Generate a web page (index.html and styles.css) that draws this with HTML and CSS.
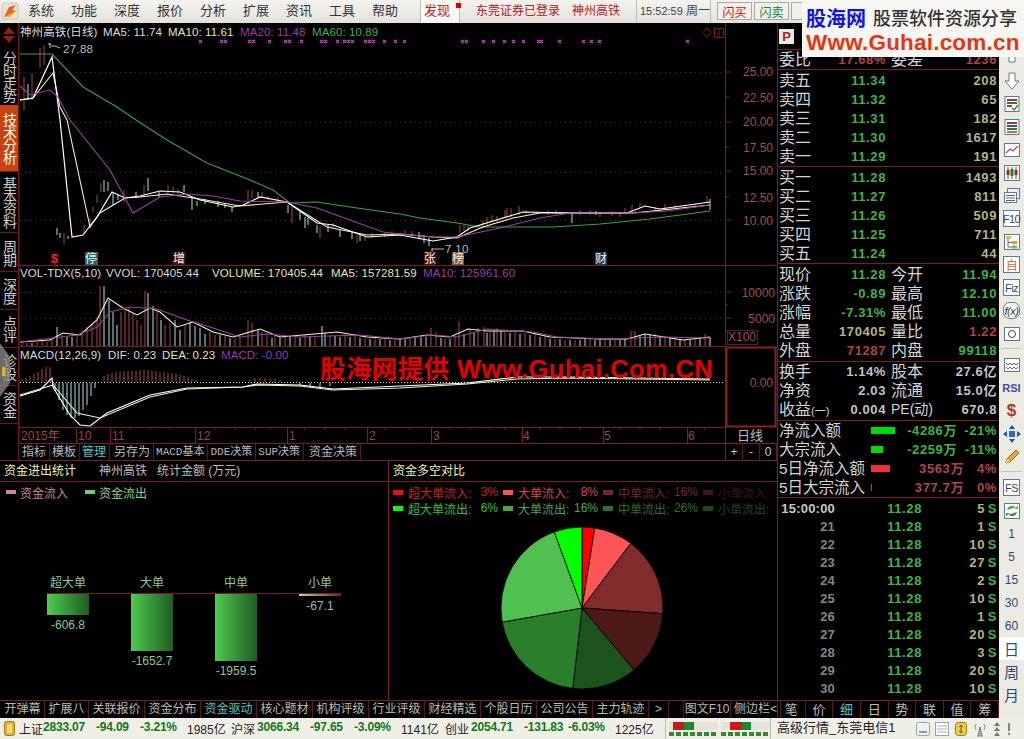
FILE: index.html
```html
<!DOCTYPE html>
<html lang="zh-CN">
<head>
  <meta charset="UTF-8" />
  <title>神州高铁 日线</title>
  <link rel="stylesheet" href="styles.css">
</head>
<body>

  <div class="menubar">
    <svg class="app-logo" width="18" height="18" viewBox="0 0 18 18"><rect x="1" y="1" width="16" height="16" rx="2" fill="#e8e4d8" stroke="#c9c4b4"/><path d="M3 15 L8 5 L15 3 L11 8 L15 9 L6 15 Z" fill="#e8641c"/><path d="M3 15 L15 9 L10 15 Z" fill="#f5b13c"/></svg>
    <nav class="menu">
      <span>系统</span><span>功能</span><span>深度</span><span>报价</span><span>分析</span><span>扩展</span><span>资讯</span><span>工具</span><span>帮助</span>
    </nav>
    <div class="menu-cell found">发现<i></i></div>
    <div class="menu-cell login"><span>东莞证券已登录</span><span>神州高铁</span></div>
    <div class="menu-cell clock">15:52:59 <span>周一</span></div>
    <div class="flash">
      <button class="buy">闪买</button>
      <button class="sell">闪卖</button>
      <button class="cut"></button>
    </div>
  </div>

  <div class="main">
    <div class="work">
      <div class="upper">
        <div class="left">
          <div class="top-row">
            <div class="vtabs">
              <div class="vtab arrows"><i class="up"></i><i class="down"></i></div>
              <div class="vtab t1"><span>分时走势</span></div>
              <div class="vtab t2 active"><span>技术分析</span></div>
              <div class="vtab t3"><span>基本资料</span></div>
              <div class="vtab t4"><span>周期</span></div>
              <div class="vtab t5"><span>深度</span></div>
              <div class="vtab t5"><span>点评</span></div>
              <div class="vtab t5"><span>诊股</span></div>
              <div class="vtab t5"><span>资金</span></div>
              <svg class="handle" width="11" height="54" viewBox="0 0 11 54"><path d="M0 0 L10 14 V40 L0 54 Z" fill="#8d8d8d" opacity=".75"/><rect x="2" y="24" width="3" height="9" fill="#e0b030"/></svg>
            </div>
            <div class="charts">
              <svg class="chart" viewBox="19 23 758 421" width="758" height="421">
                <!-- frame -->
                <path class="frame" d="M19 23V444M725.5 23V444M19 265.5H777M19 346.5H726M19 427.5H726M19 443.5H777"/>
                <path class="frame" d="M725 72h6M725 97h4M725 122h6M725 147h4M725 171h6M725 197h4M725 220h6M725 292h6M725 305h3M725 318h6M725 331h3"/>
                <path class="frame" d="M76.5 427V443M110.5 427V443M195.5 427V443M287.5 427V443M367.5 427V443M431.5 427V443M522.5 427V443M603.5 427V443M687.5 427V443"/>
                <path class="frame" d="M94 427v3M130 427v3M150 427v3M170 427v3M215 427v3M235 427v3M255 427v3M270 427v3M305 427v3M325 427v3M345 427v3M385 427v3M410 427v3M450 427v3M470 427v3M490 427v3M505 427v3M540 427v3M560 427v3M580 427v3M620 427v3M640 427v3M660 427v3M705 427v3"/>
                <rect class="axis-box" x="726.5" y="347.5" width="49" height="79"/>
                <rect class="x100" x="727.5" y="330.5" width="30" height="14"/>

                <!-- grid -->
                <path class="dots" d="M20 72.5H725M20 122.5H725M20 172.5H725M20 220.5H725M20 292.5H725M20 318.5H725"/>
                <path class="zero" d="M20 382.5H725"/>

                <!-- texts -->
                <text class="lg" y="36"><tspan x="20" class="c-w">神州高铁(日线)</tspan><tspan x="103" class="c-w">MA5: 11.74</tspan><tspan x="168" class="c-y">MA10: 11.61</tspan><tspan x="240" class="c-p">MA20: 11.48</tspan><tspan x="312" class="c-g">MA60: 10.89</tspan></text>
                <text class="lg" y="277"><tspan x="20" class="c-w">VOL-TDX(5,10)</tspan><tspan x="106" class="c-w">VVOL: 170405.44</tspan><tspan x="212" class="c-y">VOLUME: 170405.44</tspan><tspan x="331" class="c-y">MA5: 157281.59</tspan><tspan x="423" class="c-p">MA10: 125961.60</tspan></text>
                <text class="lg" y="359"><tspan x="20" class="c-w">MACD(12,26,9)</tspan><tspan x="108" class="c-w">DIF: 0.23</tspan><tspan x="162" class="c-y">DEA: 0.23</tspan><tspan x="221" class="c-p">MACD: -0.00</tspan></text>
                <text class="peak" x="63" y="53">27.88</text>
                <path class="peak-line" d="M48 44h3M50 43V48M51 46h4l5 2"/>
                <text class="peak" x="445" y="253">7.10</text>
                <path class="peak-line" d="M432 248V253M432 249h12"/>

                <text class="ax" x="773" y="76">25.00</text>
                <text class="ax" x="773" y="102">22.50</text>
                <text class="ax" x="773" y="126">20.00</text>
                <text class="ax" x="773" y="152">17.50</text>
                <text class="ax" x="773" y="175">15.00</text>
                <text class="ax" x="773" y="202">12.50</text>
                <text class="ax" x="773" y="225">10.00</text>
                <text class="ax" x="775" y="297">10000</text>
                <text class="ax" x="775" y="323">5000</text>
                <text class="ax" x="756" y="341">X100</text>
                <text class="ax" x="773" y="387">0.00</text>
                <text class="tm" x="21" y="440">2015年</text>
                <text class="tm" x="78" y="440">10</text>
                <text class="tm" x="112" y="440">11</text>
                <text class="tm" x="197" y="440">12</text>
                <text class="tm" x="289" y="440">1</text>
                <text class="tm" x="369" y="440">2</text>
                <text class="tm" x="433" y="440">3</text>
                <text class="tm" x="523" y="440">4</text>
                <text class="tm" x="604" y="440">5</text>
                <text class="tm" x="688" y="440">6</text>
                <text class="day" x="750" y="440">日线</text>

                <!-- top marks -->
                <path class="marks" d="M199 40l3 3m0-3l-3 3M220 40l3 3m0-3l-3 3M224 40l3 3m0-3l-3 3M248 40l3 3m0-3l-3 3M252 40l3 3m0-3l-3 3M268 40l3 3m0-3l-3 3M284 40l3 3m0-3l-3 3M288 40l3 3m0-3l-3 3M300 40l3 3m0-3l-3 3M320 40l3 3m0-3l-3 3M324 40l3 3m0-3l-3 3M336 40l3 3m0-3l-3 3M343 40l3 3m0-3l-3 3M347 40l3 3m0-3l-3 3M351 40l3 3m0-3l-3 3M364 40l3 3m0-3l-3 3M368 40l3 3m0-3l-3 3M372 40l3 3m0-3l-3 3M383 40l3 3m0-3l-3 3M394 40l3 3m0-3l-3 3M403 40l3 3m0-3l-3 3M461 40l3 3m0-3l-3 3M465 40l3 3m0-3l-3 3M482 40l3 3m0-3l-3 3M492 40l3 3m0-3l-3 3M503 40l3 3m0-3l-3 3M512 40l3 3m0-3l-3 3M522 40l3 3m0-3l-3 3M537 40l3 3m0-3l-3 3M540 40l3 3m0-3l-3 3M558 40l3 3m0-3l-3 3M582 40l3 3m0-3l-3 3M590 40l3 3m0-3l-3 3M598 40l3 3m0-3l-3 3M686 40l3 3m0-3l-3 3"/>
                <path class="frame" d="M703 32.5l4-4.500 4 4.500-4 4.500ZM714.500 28.500h9v9h-9ZM719 28.500v9"/>

                <!-- event tags -->
                <rect class="tag tag-red" x="50" y="252" width="9" height="13"/>
                <text class="tag-t tag-s" x="54.500" y="263">$</text>
                <rect class="tag tag-teal" x="85" y="252" width="13" height="13"/>
                <text class="tag-t" x="91" y="263">停</text>
                <rect class="tag tag-dark" x="173" y="252" width="12" height="13"/>
                <text class="tag-t" x="179" y="263">增</text>
                <rect class="tag tag-dark" x="424" y="252" width="12" height="13"/>
                <text class="tag-t" x="430" y="263">张</text>
                <rect class="tag tag-tan" x="452" y="252" width="12" height="13"/>
                <text class="tag-t" x="458" y="263">榜</text>
                <rect class="tag tag-blue" x="595" y="252" width="12" height="13"/>
                <text class="tag-t" x="601" y="263">财</text>

                <!-- candles -->
                <path class="stick-r" d="M24 77V110M32 73V100M40 48V68M44 45V65M64 233V244M84 225V233M90 218V228M93 207V212M97 195V203M101 183V192M124 190V202M144 185V195M168 185V193M173 187V193M178 189V194M248 190V200M252 190V198M262 192V197M268 196V200M278 197V202M292 207V223M320 227V238M333 223V228M357 235V243M365 236V241M372 233V238M385 232V237M392 231V236M405 230V235M412 231V236M420 236V240M460 225V233M464 225V231M468 225V231M483 220V228M487 217V225M492 215V222M497 216V222M505 210V218M507 208V217M511 208V217M519 206V215M526 210V214M534 211V214M548 210V215M556 210V214M580 210V215M590 210V215M600 212V217M612 211V216M620 212V217M625 208V214M632 205V212M640 203V208M655 207V212M665 204V210M675 205V209M685 205V209M695 204V208M707 196V203"/>
                <path class="stick-c" d="M28 84V100M57 228V235M60 233V238M68 236V239M104 180V192M108 182V191M113 193V205M118 195V200M136 192V198M148 178V191M159 192V197M184 185V192M192 197V210M197 201V206M205 199V204M218 201V207M225 204V208M232 207V212M258 192V198M288 205V213M300 212V220M305 217V228M308 218V225M317 225V233M328 225V232M340 230V237M352 232V239M360 235V241M419 232V238M424 236V243M429 238V246M572 213V223M596 211V215M710 199V210"/>

                <!-- moving averages -->
                <polyline class="ma60" points="20,54 52,54 83,87 117,107 133,118 167,140 207,163 250,180 273,190 290,203 317,202 350,207 400,214 420,218 457,223 480,227 553,227 600,224 650,219 710,211"/>
                <polyline class="ma10" points="20,100 33,98 53,73 60,107 67,120 90,227 100,213 125,198 140,197 167,194 200,199 240,206 287,202 327,227 367,235 400,234 433,237 457,238 483,227 513,218 540,213 633,213 710,205"/>
                <polyline class="ma5" points="20,100 33,98 52,57 60,120 72,237 83,235 97,217 112,192 125,198 140,196 160,191 180,192 200,200 233,207 243,205 260,197 287,202 317,223 333,225 367,237 400,235 433,241 457,237 470,228 513,215 523,212 570,213 627,213 645,206 660,209 710,202"/>
                <polyline class="ma20" points="20,86 30,95 50,90 58,97 70,120 110,170 133,213 160,197 187,194 213,196 240,201 287,202 317,208 350,220 383,232 400,234 433,237 457,237 500,228 540,218 570,213 633,213 667,211 710,205"/>

                <!-- volume -->
                <path class="bar-r" d="M22 346V343M27 346V343M37 346V342M42 346V341M47 346V342M52 346V340M62 346V335M77 346V335M82 346V331M87 346V327M92 346V324M97 346V317M100 346V286M121 346V312M125 346V310M129 346V308M133 346V313M137 346V320M141 346V325M145 346V291M157 346V312M165 346V325M170 346V323M185 346V325M210 346V332M215 346V335M225 346V336M235 346V338M240 346V337M248 346V320M252 346V323M262 346V332M267 346V335M275 346V336M285 346V337M295 346V336M305 346V335M315 346V337M330 346V335M345 346V334M355 346V336M365 346V338M375 346V338M385 346V339M395 346V339M410 346V337M431 346V328M436 346V332M445 346V338M455 346V336M459 346V321M470 346V330M478 346V328M484 346V327M490 346V332M497 346V328M505 346V332M515 346V331M525 346V333M535 346V334M545 346V336M555 346V339M565 346V340M575 346V340M590 346V339M605 346V339M615 346V340M631 346V331M635 346V331M655 346V334M665 346V336M675 346V338M685 346V340M695 346V339M705 346V334"/>
                <path class="bar-c" d="M32 346V343M57 346V327M67 346V337M72 346V337M104 346V286M109 346V300M113 346V312M117 346V325M148 346V293M153 346V306M161 346V320M175 346V320M180 346V330M190 346V322M195 346V326M200 346V328M205 346V334M220 346V335M230 346V338M258 346V330M272 346V338M280 346V338M290 346V336M300 346V338M310 346V337M322 346V326M325 346V333M335 346V336M340 346V337M350 346V337M360 346V338M370 346V339M380 346V339M390 346V340M400 346V339M405 346V338M415 346V338M421 346V337M426 346V337M441 346V338M450 346V339M464 346V334M474 346V333M487 346V333M494 346V331M501 346V331M510 346V333M520 346V334M530 346V335M540 346V337M550 346V339M560 346V339M570 346V340M580 346V340M585 346V339M595 346V340M600 346V339M610 346V340M620 346V340M625 346V339M640 346V336M645 346V335M650 346V335M660 346V337M670 346V338M680 346V339M690 346V340M700 346V338M710 346V337"/>
                <polyline class="ma10" points="20,342 50,340 63,333 80,335 97,320 108,298 123,308 137,315 150,308 160,312 177,327 193,322 213,332 233,337 260,329 280,337 337,332 367,337 400,339 427,335 450,337 468,329 487,331 523,331 550,337 600,339 627,339 645,334 683,340 710,337"/>
                <polyline class="ma20" points="20,342 77,335 97,327 110,312 130,307 157,309 187,320 213,328 240,337 267,334 300,337 360,335 400,339 433,335 457,337 487,329 533,332 557,337 607,339 667,337 710,338"/>

                <!-- macd -->
                <path class="bar-r" d="M22 382V379M26 382V378M30 382V376M34 382V374M38 382V372M42 382V369M46 382V367M50 382V367M104 382V376M108 382V374M112 382V373M116 382V372M120 382V372M124 382V371M128 382V371M132 382V371M136 382V371M140 382V370M144 382V370M148 382V370M152 382V371M156 382V371M160 382V372M164 382V372M168 382V373M172 382V373M176 382V374M180 382V375M184 382V376M188 382V377M192 382V379M196 382V380M250 382V380M255 382V378M260 382V378M265 382V378M270 382V379M275 382V379M280 382V380"/>
                <path class="bar-c" d="M55 383V391M59 383V400M63 383V410M67 383V415M71 383V418M75 383V418M79 383V416M83 383V410M87 383V405M91 383V396M95 383V388M300 383V386M310 383V386M320 383V388M330 383V386"/>
                <polyline class="ma5" points="20,396 40,390 52,378 53,387 70,415 80,425 90,426 107,413 150,395 187,388 243,387 257,384 300,385 333,389 400,386 467,383 517,377 567,377 710,379"/>
                <polyline class="ma10" points="20,395 40,389 53,385 77,413 100,418 150,397 187,389 243,387 257,385 300,386 333,390 400,388 467,384 517,379 567,378 710,380"/>
              </svg>
              <div class="chart-tabs">
                <span>指标</span><span>模板</span><span class="on">管理</span><span class="save">另存为</span><span class="mono">MACD基本</span><span class="mono">DDE决策</span><span class="mono">SUP决策</span><span class="mono-end">资金决策</span>
                <div class="zoom-btns"><b>+</b><b>-</b><b>0</b></div>
              </div>
            </div>
          </div>

          <div class="lower">
            <section class="flow-panel">
              <header class="panel-head"><strong>资金进出统计</strong><span class="stock">神州高铁</span><span>统计金额 (万元)</span></header>
              <div class="legend-simple">
                <i class="sw-in"></i><span class="txt-in">资金流入</span>
                <i class="sw-out"></i><span class="txt-out">资金流出</span>
              </div>
              <div class="bar-labels"><span>超大单</span><span>大单</span><span>中单</span><span>小单</span></div>
              <div class="baseline"></div>
              <div class="bar-cols">
                <div class="bar-col"><div class="money-bar h-xl"></div><span>-606.8</span></div>
                <div class="bar-col"><div class="money-bar h-l"></div><span>-1652.7</span></div>
                <div class="bar-col"><div class="money-bar h-m"></div><span>-1959.5</span></div>
                <div class="bar-col"><div class="money-bar h-s"></div><span>-67.1</span></div>
              </div>
            </section>
            <section class="pie-panel">
              <header class="panel-head"><strong>资金多空对比</strong></header>
              <div class="pie-legend">
                <div class="leg-item l-r1"><i></i><span>超大单流入:</span><em>3%</em></div>
                <div class="leg-item l-r2"><i></i><span>大单流入:</span><em>8%</em></div>
                <div class="leg-item l-r3"><i></i><span>中单流入:</span><em>16%</em></div>
                <div class="leg-item l-r4"><i></i><span>小单流入:</span></div>
                <div class="leg-item l-g1"><i></i><span>超大单流出:</span><em>6%</em></div>
                <div class="leg-item l-g2"><i></i><span>大单流出:</span><em>16%</em></div>
                <div class="leg-item l-g3"><i></i><span>中单流出:</span><em>26%</em></div>
                <div class="leg-item l-g4"><i></i><span>小单流出:</span></div>
              </div>
              <svg class="pie" width="166" height="166" viewBox="499 524 166 166">
                <g stroke="#000" stroke-width=".8">
                  <path fill="#ff0000" d="M582 607V526A81 81 0 0 1 594.8 527Z"/>
                  <path fill="#fb5555" d="M582 607L594.8 527A81 81 0 0 1 630.8 542.3Z"/>
                  <path fill="#802c2c" d="M582 607L630.8 542.3A81 81 0 0 1 662.8 612.7Z"/>
                  <path fill="#4c1818" d="M582 607L662.8 612.7A81 81 0 0 1 634.1 669Z"/>
                  <path fill="#1c521c" d="M582 607L634.1 669A81 81 0 0 1 572.7 687.4Z"/>
                  <path fill="#2a802a" d="M582 607L572.7 687.4A81 81 0 0 1 502.2 621.1Z"/>
                  <path fill="#50c050" d="M582 607L502.2 621.1A81 81 0 0 1 554.3 530.9Z"/>
                  <path fill="#00ff00" d="M582 607L554.3 530.9A81 81 0 0 1 582 526Z"/>
                </g>
              </svg>
            </section>
          </div>
        </div>

        <aside class="quote">
          <div class="q-head"><span class="p-box">P</span></div>
          <div class="q-sec q-ratio">
            <div class="row"><span>委比</span><b class="c-red">17.68%</b><span class="l2">委差</span><b class="c-red">1236</b></div>
          </div>
          <div class="q-sec q-book">
            <div class="row"><span>卖五</span><b class="c-grn">11.34</b><span class="l2"></span><b class="c-kh">208</b></div>
            <div class="row"><span>卖四</span><b class="c-grn">11.32</b><span class="l2"></span><b class="c-kh">65</b></div>
            <div class="row"><span>卖三</span><b class="c-grn">11.31</b><span class="l2"></span><b class="c-kh">182</b></div>
            <div class="row"><span>卖二</span><b class="c-grn">11.30</b><span class="l2"></span><b class="c-kh">1617</b></div>
            <div class="row"><span>卖一</span><b class="c-grn">11.29</b><span class="l2"></span><b class="c-kh">191</b></div>
          </div>
          <div class="q-sec q-book">
            <div class="row"><span>买一</span><b class="c-grn">11.28</b><span class="l2"></span><b class="c-kh">1493</b></div>
            <div class="row"><span>买二</span><b class="c-grn">11.27</b><span class="l2"></span><b class="c-kh">811</b></div>
            <div class="row"><span>买三</span><b class="c-grn">11.26</b><span class="l2"></span><b class="c-kh">509</b></div>
            <div class="row"><span>买四</span><b class="c-grn">11.25</b><span class="l2"></span><b class="c-kh">711</b></div>
            <div class="row"><span>买五</span><b class="c-grn">11.24</b><span class="l2"></span><b class="c-kh">44</b></div>
          </div>
          <div class="q-sec q-stats">
            <div class="row"><span>现价</span><b class="c-grn">11.28</b><span class="l2">今开</span><b class="c-grn">11.94</b></div>
            <div class="row"><span>涨跌</span><b class="c-grn">-0.89</b><span class="l2">最高</span><b class="c-grn">12.10</b></div>
            <div class="row"><span>涨幅</span><b class="c-grn">-7.31%</b><span class="l2">最低</span><b class="c-grn">11.00</b></div>
            <div class="row"><span>总量</span><b class="c-kh">170405</b><span class="l2">量比</span><b class="c-red">1.22</b></div>
            <div class="row"><span>外盘</span><b class="c-red">71287</b><span class="l2">内盘</span><b class="c-grn">99118</b></div>
          </div>
          <div class="q-sec q-fund">
            <div class="row"><span>换手</span><b class="c-gry">1.14%</b><span class="l2">股本</span><b class="c-gry">27.6亿</b></div>
            <div class="row"><span>净资</span><b class="c-gry">2.03</b><span class="l2">流通</span><b class="c-gry">15.0亿</b></div>
            <div class="row row-eps"><span class="eps">收益<small>(一)</small></span><b class="c-gry">0.004</b><span class="l2 pe">PE(动)</span><b class="c-gry">670.8</b></div>
          </div>
          <div class="q-sec q-flow">
            <div class="frow"><span>净流入额</span><i class="fbar g bw24"></i><b class="c-grn v1">-4286万</b><b class="c-grn">-21%</b></div>
            <div class="frow"><span>大宗流入</span><i class="fbar g bw12"></i><b class="c-grn v1">-2259万</b><b class="c-grn">-11%</b></div>
            <div class="frow"><span>5日净流入额</span><i class="fbar r bw19"></i><b class="c-red v2">3563万</b><b class="c-red">4%</b></div>
            <div class="frow"><span>5日大宗流入</span><i class="fbar r bw1"></i><b class="c-red v2">377.7万</b><b class="c-red">0%</b></div>
          </div>
          <div class="q-sec q-ticks">
            <div class="trow first"><span>15:00:00</span><b class="c-grn">11.28</b><b class="c-kh">5</b><b class="c-grn">S</b></div>
            <div class="trow"><span>21</span><b class="c-grn">11.28</b><b class="c-kh">1</b><b class="c-grn">S</b></div>
            <div class="trow"><span>22</span><b class="c-grn">11.28</b><b class="c-kh">10</b><b class="c-grn">S</b></div>
            <div class="trow"><span>23</span><b class="c-grn">11.28</b><b class="c-kh">27</b><b class="c-grn">S</b></div>
            <div class="trow"><span>24</span><b class="c-grn">11.28</b><b class="c-kh">2</b><b class="c-grn">S</b></div>
            <div class="trow"><span>25</span><b class="c-grn">11.28</b><b class="c-kh">10</b><b class="c-grn">S</b></div>
            <div class="trow"><span>26</span><b class="c-grn">11.28</b><b class="c-kh">1</b><b class="c-grn">S</b></div>
            <div class="trow"><span>27</span><b class="c-grn">11.28</b><b class="c-kh">20</b><b class="c-grn">S</b></div>
            <div class="trow"><span>28</span><b class="c-grn">11.28</b><b class="c-kh">3</b><b class="c-grn">S</b></div>
            <div class="trow"><span>29</span><b class="c-grn">11.28</b><b class="c-kh">20</b><b class="c-grn">S</b></div>
            <div class="trow"><span>30</span><b class="c-grn">11.28</b><b class="c-kh">10</b><b class="c-grn">S</b></div>
          </div>
        </aside>
      </div>

      <div class="bottom-tabs">
        <div class="btabs-left">
          <span class="n3">开弹幕</span><span class="n3">扩展八</span><span>关联报价</span><span>资金分布</span><span class="on">资金驱动</span><span>核心题材</span><span>机构评级</span><span>行业评级</span><span>财经精选</span><span>个股日历</span><span>公司公告</span><span>主力轨迹</span><span class="more">&gt;</span><span class="f10">图文F10</span><span class="side">侧边栏&lt;</span>
        </div>
        <div class="btabs-right">
          <span>笔</span><span>价</span><span class="on">细</span><span>日</span><span>势</span><span>联</span><span>值</span><span>筹</span>
        </div>
      </div>
    </div>

    <div class="tools">
      <div class="tool"><svg width="18" height="18" viewBox="0 0 18 18"><path d="M6 1h6v12H6Z" fill="#fff" stroke="#5b7a95"/></svg></div>
      <div class="tool"><svg width="18" height="18" viewBox="0 0 18 18"><path d="M6 1h6v8h4l-7 8-7-8h4Z" fill="#fff" stroke="#5b7a95"/></svg></div>
      <div class="tool"><svg width="18" height="18" viewBox="0 0 18 18"><rect x="2" y="1.500" width="14" height="15" fill="#fff" stroke="#5b7a95"/><path d="M4 5h10" stroke="#b03030" stroke-width="2"/><path d="M4 8h10" stroke="#208030" stroke-width="2"/><path d="M4 11h5" stroke="#b03030" stroke-width="2"/><path d="M9 13l2 2 4-5" fill="none" stroke="#667" stroke-width="1.500"/></svg></div>
      <div class="tool"><svg width="18" height="18" viewBox="0 0 18 18"><rect x="2" y="1.500" width="14" height="15" fill="#fff" stroke="#5b7a95"/><path d="M4 5h10" stroke="#b03030" stroke-width="2"/><path d="M4 8h10" stroke="#3050a0" stroke-width="2"/><path d="M4 11h10" stroke="#208030" stroke-width="2"/><path d="M4 14h10" stroke="#b03030" stroke-width="1.500"/></svg></div>
      <div class="tool"><svg width="18" height="18" viewBox="0 0 18 18"><rect x="1.500" y="2.500" width="15" height="13" fill="#fff" stroke="#5b7a95"/><path d="M3 12l4-4 3 2 5-5" fill="none" stroke="#c04040" stroke-width="1.200"/></svg></div>
      <div class="tool"><svg width="18" height="18" viewBox="0 0 18 18"><rect x="1.500" y="1.500" width="15" height="15" fill="#fff" stroke="#5b7a95"/><path d="M5 3v12M13 3v12" stroke="#b02020"/><path d="M9 3v12" stroke="#208030"/><rect x="3.500" y="6" width="3" height="5" fill="#b02020"/><rect x="7.500" y="5" width="3" height="7" fill="#208030"/><rect x="11.500" y="6" width="3" height="5" fill="#b02020"/></svg></div>
      <div class="tool"><svg width="18" height="18" viewBox="0 0 18 18"><rect x="4.500" y="1.500" width="12" height="10" fill="#eef" stroke="#5b7a95"/><rect x="1.500" y="5.500" width="12" height="10" fill="#fff" stroke="#5b7a95"/><path d="M3 8.500h9M3 11h9M3 13.500h9" stroke="#567"/></svg></div>
      <div class="tool"><span class="boxed">F10</span></div>
      <div class="tool"><svg width="18" height="18" viewBox="0 0 18 18"><rect x="1.500" y="1.500" width="15" height="15" fill="#fff" stroke="#5b7a95"/><rect x="3" y="3" width="5" height="3" fill="#e0c040"/><rect x="9" y="8" width="5" height="3" fill="#e0a040"/><rect x="9" y="12.500" width="5" height="3" fill="#90b060"/><path d="M5 6v8h4M5 9.500h4" fill="none" stroke="#667"/></svg></div>
      <div class="tool"><span class="boxed orange">自</span></div>
      <div class="tool"><span class="boxed">Fiz</span></div>
      <div class="tool"><span class="boxed round"><i>f(x)</i></span></div>
      <div class="tool"><svg width="18" height="18" viewBox="0 0 18 18"><rect x="1.500" y="2.500" width="15" height="13" fill="#fff" stroke="#5b7a95"/><circle cx="9" cy="9" r="3.500" fill="none" stroke="#345"/></svg></div>
      <div class="tool-sep"></div>
      <div class="tool"><svg width="18" height="18" viewBox="0 0 18 18"><rect x="1.500" y="2.500" width="15" height="13" fill="#fff" stroke="#5b7a95"/><path d="M3 7l2 2 2-2 2 2 2-2 2 2 2-2" fill="none" stroke="#c04040"/><path d="M3 11l2 2 2-2 2 2 2-2 2 2 2-2" fill="none" stroke="#6060c0"/></svg></div>
      <div class="tool rsi">RSI</div>
      <div class="tool dollar">$</div>
      <div class="tool"><svg width="18" height="18" viewBox="0 0 18 18"><path d="M9 0l3 4H6ZM9 18l-3-4h6ZM0 9l4-3v6ZM18 9l-4 3V6Z" fill="#1f54a8"/><rect x="6" y="6" width="6" height="6" fill="#2c6ac4"/></svg></div>
      <div class="tool"><svg width="18" height="18" viewBox="0 0 18 18"><path d="M3 15l1-4L13 2l3 3-9 9Z" fill="#e8a830" stroke="#946a20"/><path d="M3 15l1-4 3 3Z" fill="#f5dcb0"/></svg></div>
      <div class="tool-sep"></div>
      <div class="tool"><span class="boxed">FS</span></div>
      <div class="tool"><svg width="18" height="18" viewBox="0 0 18 18"><rect x="1.500" y="1.500" width="15" height="15" fill="#fff" stroke="#5b7a95"/><path d="M4 8a5 5 0 0 1 9-2l-2 1h4V3l-1 2" fill="#5aa850"/><path d="M14 10a5 5 0 0 1-9 2l2-1H3v4l1-2" fill="#4a8a40"/></svg></div>
      <div class="tool per">1</div>
      <div class="tool per">5</div>
      <div class="tool per">15</div>
      <div class="tool per">30</div>
      <div class="tool per">60</div>
      <div class="tool per big cur">日</div>
      <div class="tool per big">周</div>
      <div class="tool per big">月</div>
    </div>
  </div>

  <div class="statusbar">
    <svg class="st-ico" width="11" height="15" viewBox="0 0 11 15"><rect x=".5" y=".5" width="10" height="14" rx="2" fill="#e8b030" stroke="#a07818"/><rect x="3" y="3" width="5" height="9" fill="#f5da80"/></svg>
    <div class="idx">
      <span class="nm">上证</span><b class="n1">2833.07</b><b class="n2">-94.09</b><b class="n3">-3.21%</b><span class="n4">1985亿</span>
      <span class="nm">沪深</span><b class="n1">3066.34</b><b class="n2">-97.65</b><b class="n3">-3.09%</b><span class="n4">1141亿</span>
      <span class="nm">创业</span><b class="n1">2054.71</b><b class="n2">-131.83</b><b class="n3">-6.03%</b><span class="n4">1225亿</span>
    </div>
    <div class="meters">
      <div class="meter"><div class="m-top"><i class="mr a"></i><i class="mg b"></i></div><div class="m-dash"></div></div>
      <div class="meter"><div class="m-top"><i class="mr c"></i><i class="mg d"></i></div><div class="m-dash"></div></div>
    </div>
    <div class="feed">高级行情_东莞电信1</div>
    <div class="st-icons">
      <svg width="16" height="16" viewBox="0 0 16 16"><rect x="1.500" y="1.500" width="13" height="13" rx="2" fill="#eef2f6" stroke="#8aa"/><rect x="4" y="10" width="8" height="2" fill="#999"/></svg>
      <svg width="16" height="16" viewBox="0 0 16 16"><rect x="1.500" y="1.500" width="13" height="13" fill="#fff" stroke="#8aa"/><path d="M3 5h10M3 8h10M3 11h10" stroke="#aaa"/></svg>
      <svg width="16" height="16" viewBox="0 0 16 16"><rect x="2.500" y="1.500" width="11" height="13" rx="3" fill="#f0d040" stroke="#907818"/><path d="M8 4v8M6 6l2-2 2 2M6 10l2 2 2-2" fill="none" stroke="#554"/></svg>
      <svg width="16" height="16" viewBox="0 0 16 16"><path d="M8 6v9M5 15h6M6 15l2-9 2 9" fill="none" stroke="#778"/><path d="M4 3a5 5 0 0 0 0 6M12 3a5 5 0 0 1 0 6" fill="none" stroke="#6a8"/></svg>
      <svg width="12" height="16" viewBox="0 0 12 16"><path d="M6 1l3 4H3ZM6 6l3 4H3ZM6 11l3 4H3Z" fill="#777"/></svg>
      <svg width="6" height="16" viewBox="0 0 6 16"><path d="M3 2v8" stroke="#887" stroke-width="2"/><circle cx="3" cy="13" r="1.200" fill="#887"/></svg>
    </div>
  </div>

  <!-- site stamps that lie over the window -->
  <div class="stamp">
    <div class="stamp-top"><strong>股海网</strong><span>股票软件资源分享</span></div>
    <div class="stamp-url">Www.Guhai.com.cn</div>
  </div>
  <div class="watermark">股海网提供 Www.Guhai.Com.CN</div>

</body>
</html>
```

FILE: styles.css
```css
* {
  box-sizing: border-box;
}

html, body {
  margin: 0;
  width: 1024px;
  height: 739px;
  overflow: hidden;
  background: #000;
}

body {
  position: relative;
  font-family: "Liberation Sans", "Noto Sans CJK SC", sans-serif;
  font-size: 12px;
  color: #ccc;
}

/* menu bar */
.menubar {
  height: 23px;
  display: flex;
  align-items: stretch;
  background: linear-gradient(#f4f3ef, #e4e2da);
  color: #333;
  font-size: 13px;
  line-height: 22px;
}

.app-logo {
  margin: 2px 0 0 1px;
  flex: none;
}

.menu {
  display: flex;
  width: 401px;
  padding-left: 9px;
}

.menu span {
  width: 43px;
}

.menu-cell {
  border-left: 1px solid #bbb;
  white-space: nowrap;
}

.found {
  width: 39px;
  padding-left: 3px;
  color: #c02020;
  position: relative;
  background: #f8f8f4;
}

.found i {
  display: inline-block;
  width: 5px;
  height: 5px;
  margin: 0 0 7px 6px;
  background: #e00000;
}

.login {
  width: 177px;
  padding-left: 16px;
  color: #b02020;
  font-size: 12px;
  display: flex;
  gap: 12px;
}

.clock {
  width: 74px;
  padding-left: 3px;
  color: #444;
  font-size: 11px;
}

.clock span {
  font-size: 12px;
}

.flash {
  border-left: 1px solid #bbb;
  padding: 2px 0 0 6px;
  display: flex;
  gap: 2px;
}

.flash button {
  width: 35px;
  height: 18px;
  padding: 0;
  font: 12px "Liberation Sans", "Noto Sans CJK SC", sans-serif;
  background: #f0efea;
  border: 1px solid #aaa;
  color: #333;
}

.flash .buy { color: #c02020; }
.flash .sell { color: #208030; }
.flash .cut { width: 11px; border-right: none; }

/* main split */
.main {
  display: flex;
  height: 695px;
}

.work {
  width: 999px;
  flex: none;
}

.upper {
  display: flex;
  height: 677px;
}

.left {
  width: 777px;
  flex: none;
}

.top-row {
  display: flex;
  height: 437px;
}

/* vertical tabs */
.vtabs {
  position: relative;
  width: 19px;
  flex: none;
  border-right: 1px solid #6d1818;
  color: #ccc;
  font-size: 14px;
  background: #000;
}

.vtab {
  display: flex;
  align-items: center;
  justify-content: center;
  border-bottom: 1px solid #6d1818;
}

.vtab span {
  writing-mode: vertical-rl;
  text-orientation: upright;
  line-height: 16px;
  letter-spacing: -1.500px;
}

.arrows {
  height: 24px;
  flex-direction: column;
  gap: 2px;
  border: none;
}

.arrows i {
  width: 0;
  height: 0;
  border-left: 6px solid transparent;
  border-right: 6px solid transparent;
}

.arrows .up { border-bottom: 7px solid #8e1d10; }
.arrows .down { border-top: 7px solid #8e1d10; }

.t1 { height: 58px; border-bottom: none; }
.t2 { height: 67px; }
.t3 { height: 61px; }
.t4 { height: 39px; }
.t5 { height: 38px; }

.active {
  background: #c8420f;
  color: #fff;
}

.handle {
  position: absolute;
  left: 0;
  top: 320px;
}

/* chart area */
.charts {
  width: 758px;
  flex: none;
}

.chart {
  display: block;
}

.frame {
  fill: none;
  stroke: #7a1e1e;
}

.axis-box {
  fill: none;
  stroke: #8a2020;
  stroke-width: 2;
}

.x100 {
  fill: none;
  stroke: #5a2020;
}

.dots {
  stroke: #6a2424;
  stroke-dasharray: 1 4;
}

.zero {
  stroke: #d8d8d8;
  stroke-dasharray: 1 2;
}

.lg {
  font-size: 11.500px;
  letter-spacing: .1px;
}

.c-w { fill: #dcdcdc; }
.c-y { fill: #e6e6a8; }
.c-p { fill: #9c3ca8; }
.c-g { fill: #4aa84a; }

.peak {
  font-size: 11.500px;
  letter-spacing: .3px;
  fill: #bbb;
}

.peak-line {
  fill: none;
  stroke: #bbb;
}

.ax {
  font-size: 12px;
  text-anchor: end;
  fill: #a24f4f;
}

.tm {
  font-size: 12px;
  fill: #9a4545;
}

.day {
  font-size: 13px;
  text-anchor: middle;
  fill: #bbb;
}

.marks {
  fill: none;
  stroke: #c040c0;
  stroke-width: 1.300;
}

.tag-red { fill: #300808; }
.tag-teal { fill: #1c6a6a; }
.tag-dark { fill: #4a1010; }
.tag-tan { fill: #7a5a38; }
.tag-blue { fill: #153c5c; }

.tag-t {
  font-size: 12px;
  text-anchor: middle;
  fill: #eee;
}

.tag-s {
  fill: #d83030;
  font-weight: bold;
}

.stick-r,
.bar-r {
  fill: none;
  stroke: #a8483f;
}

.stick-c,
.bar-c {
  fill: none;
  stroke: #a8e4e4;
}

polyline {
  fill: none;
}

.ma5 { stroke: #fff; stroke-width: 1.200; }
.ma10 { stroke: #f4f4b8; stroke-width: 1.100; }
.ma20 { stroke: #a03ca8; stroke-width: 1.100; }
.ma60 { stroke: #3ea03e; stroke-width: 1.100; }

.chart-tabs {
  display: flex;
  height: 16px;
  line-height: 16px;
  font-size: 12px;
  color: #b8b8b8;
  padding-left: .5px;
}

.chart-tabs span {
  padding: 0 2.500px;
  border-right: 1px solid #5a1a1a;
  white-space: nowrap;
}

.chart-tabs .on { color: #55c0c0; }
.chart-tabs .save { padding-left: 4.500px; }

.chart-tabs .mono {
  font-family: "Liberation Mono", "Noto Sans CJK SC", monospace;
  font-size: 11px;
}

.chart-tabs .mono-end { margin-left: 3px; }

.zoom-btns {
  margin-left: auto;
  width: 52px;
  display: flex;
  border-left: 1px solid #7a1e1e;
}

.zoom-btns b {
  flex: 1;
  text-align: center;
  font-weight: 400;
  border-right: 1px solid #5a1a1a;
  color: #ccc;
}

/* lower panels */
.lower {
  display: flex;
  height: 240px;
  border-top: 1px solid #7a1e1e;
}

.flow-panel {
  width: 388px;
  flex: none;
}

.pie-panel {
  width: 389px;
  flex: none;
  border-left: 1px solid #7a1e1e;
  overflow: hidden;
}

.panel-head {
  height: 21px;
  line-height: 20px;
  border-bottom: 1px solid #7a1e1e;
  padding-left: 4px;
  display: flex;
  color: #bdbdbd;
  font-size: 12px;
}

.panel-head strong {
  font-weight: 400;
  color: #f0f0b0;
}

.stock {
  margin: 0 10px 0 23px;
}

.legend-simple {
  display: flex;
  align-items: center;
  height: 20px;
  padding-left: 6px;
  font-size: 12px;
}

.legend-simple i {
  width: 10px;
  height: 4px;
  margin-right: 4px;
}

.sw-in { background: #c88a8a; }
.sw-out { background: #6ccf6c; margin-left: 17px; }
.txt-in { color: #c88a8a; }
.txt-out { color: #8ccf8c; }

.bar-labels,
.bar-cols {
  display: grid;
  grid-template-columns: repeat(4, 84px);
  margin-left: 26px;
  color: #8fc88f;
  text-align: center;
}

.bar-labels {
  margin-top: 71px;
  height: 20px;
  line-height: 20px;
}

.baseline {
  height: 1px;
  margin: 0 47px;
  background: #7a1e1e;
}

.bar-col {
  display: flex;
  flex-direction: column;
  align-items: center;
  gap: 3px;
  font-size: 12px;
}

.money-bar {
  width: 42px;
  background: linear-gradient(90deg, #4fcb52, #1e5c22);
}

.h-xl { height: 21px; }
.h-l { height: 57px; }
.h-m { height: 67px; }
.h-s { height: 2px; background: linear-gradient(90deg, #b8d8b8, #5a3010); }

.pie-legend {
  display: grid;
  grid-template-columns: 110px 100px 100px 100px;
  width: 420px;
  margin-top: 2px;
  padding-left: 4px;
  font-size: 12px;
}

.leg-item {
  display: flex;
  align-items: center;
  height: 16px;
  white-space: nowrap;
}

.leg-item i {
  width: 10px;
  height: 5px;
  margin-right: 5px;
  flex: none;
  background: currentColor;
}

.leg-item em {
  font-style: normal;
  margin-left: auto;
  padding-right: 5px;
}

.l-r1 { color: #c82020; }
.l-r1 i { background: #e81010; }
.l-r2 { color: #d84848; }
.l-r2 i { background: #fb5555; }
.l-r3 { color: #702828; }
.l-r4 { color: #421616; }
.l-g1 { color: #30c030; }
.l-g1 i { background: #00ff00; }
.l-g2 { color: #48a848; }
.l-g3 { color: #2a702a; }
.l-g4 { color: #1c481c; }

.pie {
  display: block;
  margin: 9px 0 0 110px;
}

/* quote panel */
.quote {
  width: 222px;
  flex: none;
  border-left: 1px solid #7a1e1e;
  padding: 0;
}

.q-head {
  height: 27px;
  border-bottom: 1px solid #7a1e1e;
  padding: 6px 0 0 1px;
}

.p-box {
  display: block;
  width: 15px;
  height: 15px;
  background: #e8e8e8;
  color: #b02020;
  font: bold 13px/15px "Liberation Sans", sans-serif;
  text-align: center;
}

.q-sec {
  border-bottom: 1px solid #7a1e1e;
  padding: 0 2px 0 1px;
}

.q-ratio { height: 20px; }
.q-book { height: 97px; padding-top: 1px; }
.q-stats { height: 98px; padding-top: 1px; }
.q-fund { height: 59px; }
.q-flow { height: 77px; }
.q-ticks { height: 202px; padding-top: 2px; border-bottom: none; }

.row {
  display: grid;
  grid-template-columns: 36px 71px 41px 70px;
  height: 19px;
  line-height: 19px;
  font-size: 16px;
  color: #d4d4d4;
  white-space: nowrap;
}

.row b,
.frow b,
.trow b,
.trow span {
  font-size: 13px;
  font-weight: bold;
  text-align: right;
  letter-spacing: .6px;
}

.row .l2 {
  padding-left: 5px;
}

.row .pe {
  font-size: 14px;
}

.eps {
  display: block;
  width: 36px;
  white-space: nowrap;
}

.eps small {
  font-size: 11px;
}

.c-red { color: #b04545; }
.c-grn { color: #3fb445; }
.c-kh { color: #b4b482; }
.c-gry { color: #c4c4c4; }

.frow {
  display: grid;
  grid-template-columns: 92px 30px 1fr 40px;
  height: 19px;
  line-height: 19px;
  font-size: 15.500px;
  color: #d4d4d4;
  align-items: center;
  white-space: nowrap;
}

.fbar {
  height: 7px;
  display: block;
}

.fbar.g { background: #00dc00; }
.fbar.r { background: #f03030; }
.bw24 { width: 24px; }
.bw12 { width: 12px; }
.bw19 { width: 19px; }
.bw1 { width: 1px; }

.v2 { margin-right: -7px; }

.trow {
  display: grid;
  grid-template-columns: 56px 87px 63px 12px;
  height: 18px;
  line-height: 18px;
  color: #858585;
}

.trow span {
  letter-spacing: .2px;
  white-space: nowrap;
}

.trow.first span { color: #c8c8c8; }

.bottom-tabs {
  display: flex;
  height: 18px;
  border-top: 1px solid #7a1e1e;
  line-height: 17px;
  font-size: 12px;
  color: #bcbca8;
}

.btabs-left {
  width: 777px;
  flex: none;
  display: flex;
  padding-left: 1px;
}

.btabs-left span {
  width: 56px;
  flex: none;
  text-align: center;
  border-right: 1px solid #5a1a1a;
  white-space: nowrap;
}

.btabs-left .n3 { width: 44px; }
.btabs-left .more { width: 20px; }
.btabs-left .f10 { width: 48px; margin-left: 14px; border-left: 1px solid #5a1a1a; }
.btabs-left .side { width: 50px; }
.btabs-left .on { color: #55c0c0; }

.btabs-right {
  width: 222px;
  flex: none;
  display: grid;
  grid-template-columns: repeat(8, 1fr);
  border-left: 1px solid #7a1e1e;
  font-size: 13px;
  color: #bbb;
}

.btabs-right span {
  text-align: center;
  border-right: 1px solid #5a1a1a;
}

.btabs-right .on { color: #55c0c0; }

/* right tool strip */
.tools {
  width: 25px;
  flex: none;
  background: #ecebe3;
  padding-top: 23px;
  overflow: hidden;
  height: 695px;
  display: flex;
  flex-direction: column;
}

.tool {
  flex: none;
  height: 23px;
  display: flex;
  align-items: center;
  justify-content: center;
}

.tool-sep {
  flex: none;
  height: 8px;
  margin: 0 2px;
  position: relative;
}

.tool-sep::after {
  content: "";
  position: absolute;
  left: 0;
  right: 0;
  top: 3px;
  border-top: 1px solid #c4c3ba;
}

.boxed {
  width: 17px;
  height: 17px;
  display: flex;
  align-items: center;
  justify-content: center;
  border: 1px solid #5b7a95;
  background: #fff;
  color: #1f4a78;
  font-size: 11px;
  letter-spacing: -.5px;
}

.boxed.orange {
  color: #d06a30;
  font-size: 12px;
}

.boxed.round {
  border-radius: 7px;
  color: #333;
}

.rsi {
  color: #3a4fa8;
  font-size: 11px;
  font-weight: bold;
}

.dollar {
  color: #a83a30;
  font-size: 17px;
  font-weight: bold;
}

.per {
  color: #2e4878;
  font-size: 12px;
}

.per.big {
  font-size: 15px;
}

.per.cur {
  background: #fff;
}

/* status bar */
.statusbar {
  display: flex;
  align-items: center;
  height: 21px;
  background: #f0efe6;
  color: #222;
  font-size: 12px;
  white-space: nowrap;
}

.st-ico {
  margin-left: 4px;
  flex: none;
}

.idx {
  display: flex;
  margin-left: 4px;
  width: 646px;
  flex: none;
}

.idx b {
  color: #0a7a1a;
  letter-spacing: -.2px;
}

.nm { width: 26px; flex: none; }
.nm:first-child { width: 24px; }
.n1 { width: 53px; flex: none; }
.n2 { width: 44px; flex: none; }
.n3 { width: 47px; flex: none; }
.n4 { width: 44px; flex: none; }

.meters {
  display: flex;
  gap: 3px;
  width: 105px;
  flex: none;
  padding-left: 3px;
  border-left: 1px solid #bbb;
  height: 21px;
  align-items: center;
}

.meter {
  width: 49px;
}

.m-top {
  display: flex;
  height: 8px;
  background: #e4e3da;
  margin-bottom: 2px;
}

.mr { background: #c81818; height: 100%; }
.mg { background: #1a8a30; height: 100%; }
.a { width: 11px; margin-left: 4px; }
.b { width: 10px; }
.c { width: 12px; margin-left: 9px; }
.d { width: 9px; }

.m-dash {
  height: 4px;
  background: repeating-linear-gradient(90deg, #2e8a30 0 5px, transparent 5px 7px);
}

.feed {
  width: 145px;
  padding-left: 6px;
  border-left: 1px solid #bbb;
  height: 21px;
  line-height: 20px;
  font-size: 13px;
  flex: none;
}

.st-icons {
  display: flex;
  align-items: center;
  gap: 3px;
}

/* overlays */
.stamp {
  position: absolute;
  left: 802px;
  top: 0;
  width: 222px;
  height: 57px;
  background: #f6f6f3;
  padding: 5px 0 0 4px;
}

.stamp-top {
  display: flex;
  align-items: center;
  height: 25px;
}

.stamp-top strong {
  color: #1414e0;
  font: bold 20px/25px "Noto Sans CJK SC", sans-serif;
  width: 67px;
}

.stamp-top span {
  color: #333;
  font: 500 18px/25px "Noto Sans CJK SC", sans-serif;
}

.stamp-url {
  color: #e83410;
  font: bold 22.500px/22px "Liberation Sans", sans-serif;
  margin-top: 2px;
  letter-spacing: .2px;
}

.watermark {
  position: absolute;
  left: 320px;
  top: 354px;
  color: #e40000;
  font: bold 25.500px/30px "Liberation Sans", "Noto Sans CJK SC", sans-serif;
  letter-spacing: .4px;
  white-space: nowrap;
}
```
